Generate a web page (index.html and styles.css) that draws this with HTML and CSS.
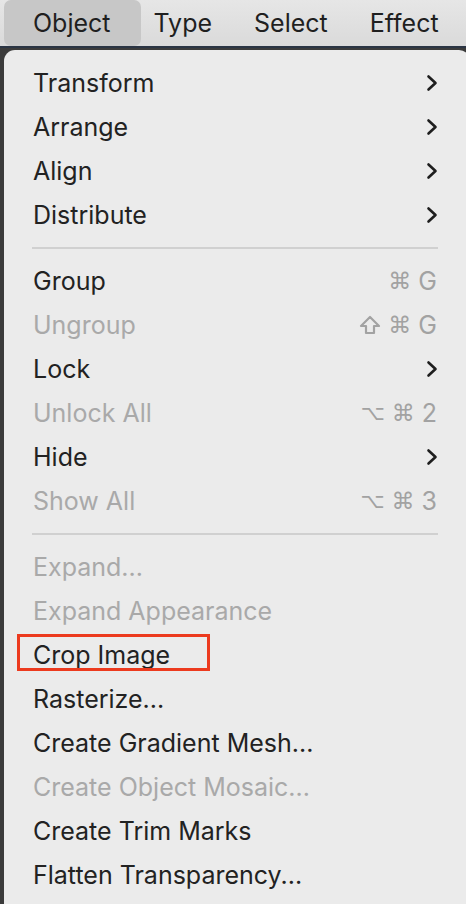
FILE: index.html
```html
<!DOCTYPE html>
<html>
<head>
<meta charset="utf-8">
<link rel="stylesheet" href="styles.css">
</head>
<body>
<div class="menubar">
  <span class="mb-item mb-active">Object</span>
  <span class="mb-item mb-type">Type</span>
  <span class="mb-item">Select</span>
  <span class="mb-item">Effect</span>
</div>
<div class="panel">
  <div class="row"><span class="label">Transform</span><svg class="chev" viewBox="0 0 12 18"><polyline points="2.5,2.5 9.5,9 2.5,15.5"/></svg></div>
  <div class="row"><span class="label">Arrange</span><svg class="chev" viewBox="0 0 12 18"><polyline points="2.5,2.5 9.5,9 2.5,15.5"/></svg></div>
  <div class="row"><span class="label">Align</span><svg class="chev" viewBox="0 0 12 18"><polyline points="2.5,2.5 9.5,9 2.5,15.5"/></svg></div>
  <div class="row"><span class="label">Distribute</span><svg class="chev" viewBox="0 0 12 18"><polyline points="2.5,2.5 9.5,9 2.5,15.5"/></svg></div>
  <div class="sep"></div>
  <div class="row"><span class="label">Group</span><span class="key"><span class="sym">⌘</span><span class="k">G</span></span></div>
  <div class="row dis"><span class="label">Ungroup</span><span class="key"><svg class="shift" viewBox="0 0 22 20"><path d="M11 2 L20 11 L15 11 L15 18 L7 18 L7 11 L2 11 Z"/></svg><span class="sym">⌘</span><span class="k">G</span></span></div>
  <div class="row"><span class="label">Lock</span><svg class="chev" viewBox="0 0 12 18"><polyline points="2.5,2.5 9.5,9 2.5,15.5"/></svg></div>
  <div class="row dis"><span class="label">Unlock All</span><span class="key"><span class="sym opt">⌥</span><span class="sym">⌘</span><span class="k">2</span></span></div>
  <div class="row"><span class="label">Hide</span><svg class="chev" viewBox="0 0 12 18"><polyline points="2.5,2.5 9.5,9 2.5,15.5"/></svg></div>
  <div class="row dis"><span class="label">Show All</span><span class="key"><span class="sym opt">⌥</span><span class="sym">⌘</span><span class="k">3</span></span></div>
  <div class="sep"></div>
  <div class="row dis"><span class="label">Expand...</span></div>
  <div class="row dis"><span class="label">Expand Appearance</span></div>
  <div class="row"><span class="label">Crop Image</span><span class="redbox"></span></div>
  <div class="row"><span class="label">Rasterize...</span></div>
  <div class="row"><span class="label">Create Gradient Mesh...</span></div>
  <div class="row dis"><span class="label">Create Object Mosaic...</span></div>
  <div class="row"><span class="label">Create Trim Marks</span></div>
  <div class="row"><span class="label">Flatten Transparency...</span></div>
</div>
</body>
</html>
```

FILE: styles.css
```css
html, body {
  margin: 0;
  padding: 0;
}
body {
  width: 466px;
  height: 904px;
  overflow: hidden;
  background: #3b3b3b;
  font-family: "Inter", "Noto Sans", sans-serif;
  -webkit-font-smoothing: antialiased;
}
.menubar {
  height: 46px;
  display: flex;
  align-items: stretch;
  background: linear-gradient(#e6e6e6, #dadada);
  border-bottom: 2px solid #2b3544;
  padding-left: 4px;
}
.mb-item {
  display: flex;
  align-items: center;
  padding: 0 21px;
  font-size: 25px;
  color: #1f1f1f;
}
.mb-active {
  background: #c7c7c7;
  border-radius: 7px;
  padding: 0 30px 0 29px;
}
.mb-type {
  padding-left: 13px;
}
.panel {
  margin-top: 2px;
  margin-left: 4px;
  width: 466px;
  height: 854px;
  background: #ebebeb;
  border-radius: 11px 11px 0 0;
  padding: 11px 0 0 0;
  box-sizing: border-box;
}
.row {
  position: relative;
  height: 44px;
  display: flex;
  align-items: center;
  justify-content: space-between;
  padding: 0 33px 0 29px;
}
.label {
  font-size: 25px;
  color: #222222;
}
.dis .label {
  color: #a9a9a9;
}
.chev {
  width: 12px;
  height: 18px;
  margin-right: -1px;
  fill: none;
  stroke: #1e1e1e;
  stroke-width: 2.6;
  stroke-linecap: round;
  stroke-linejoin: round;
}
.key {
  color: #a2a2a2;
  display: flex;
  align-items: center;
  gap: 7px;
}
.sym {
  font-family: "DejaVu Sans", sans-serif;
  font-size: 23px;
  line-height: 1;
}
.sym.opt {
  font-size: 21px;
}
.key .k {
  font-family: "Inter", sans-serif;
  font-size: 25px;
  line-height: 1;
}
.shift {
  width: 22px;
  height: 20px;
  fill: none;
  stroke: #a2a2a2;
  stroke-width: 2.2;
  stroke-linejoin: round;
}
.sep {
  height: 22px;
  display: flex;
  align-items: center;
  margin: 0 32px 0 28px;
}
.sep::before {
  content: "";
  display: block;
  width: 100%;
  height: 2px;
  background: #d0d0d0;
}
.redbox {
  position: absolute;
  left: 13px;
  top: 1px;
  width: 193px;
  height: 37px;
  border: 3px solid #ec3a1e;
  box-sizing: border-box;
}
```
